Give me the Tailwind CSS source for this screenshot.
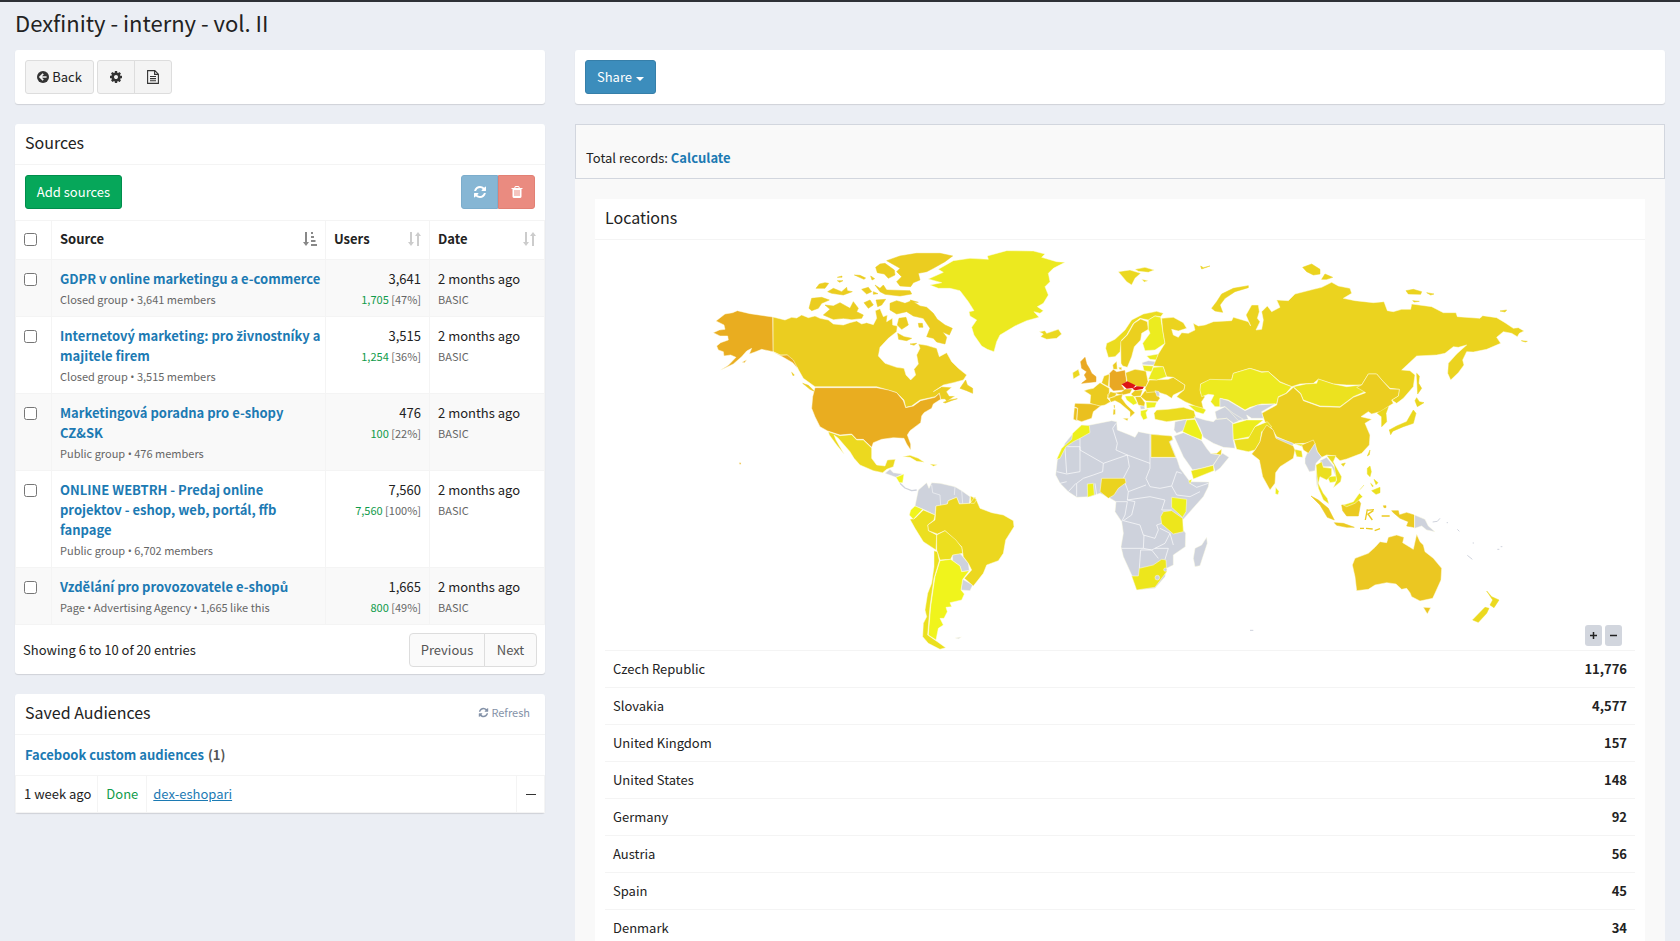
<!DOCTYPE html>
<html lang="en">
<head>
    <meta charset="UTF-8">
    <meta name="viewport" content="width=device-width, initial-scale=1.0">
    <title>Dexfinity - interny - vol. II</title>
    <script src="https://cdn.jsdelivr.net/npm/@tailwindcss/browser@4"></script>
    <style>
        body { font-family: 'Noto Sans CJK SC', 'Noto Sans', sans-serif; }
        #map path { stroke-linejoin: round; }
    </style>
</head>
<body class="bg-[#ebeef4] min-h-screen text-[13px] leading-5 text-[#222] border-t-2 border-[#2e3036]">
    <!-- Shared icons -->
    <svg class="hidden">
        <symbol id="i-refresh" viewBox="0 0 1792 1792"><path d="M1639 1056q0 5-1 7-64 268-268 434.5t-478 166.5q-146 0-282.5-55t-243.5-157l-129 129q-19 19-45 19t-45-19-19-45v-448q0-26 19-45t45-19h448q26 0 45 19t19 45-19 45l-137 137q71 66 161 102t187 36q134 0 250-65t186-179q11-17 53-117 8-23 30-23h192q13 0 22.5 9.5t9.5 22.5zm25-800v448q0 26-19 45t-45 19h-448q-26 0-45-19t-19-45 19-45l138-138q-148-137-349-137-134 0-250 65t-186 179q-11 17-53 117-8 23-30 23h-199q-13 0-22.5-9.5t-9.5-22.5v-7q65-268 270-434.5t480-166.5q146 0 284 55.5t245 156.5l130-129q19-19 45-19t45 19 19 45z"/></symbol>
        <symbol id="i-sort" viewBox="0 0 14 14"><path d="M3 0h2v10h2l-3 4-3-4h2zM10 14V4H8l3-4 3 4h-2v10z"/></symbol>
    </svg>

    <h1 class="px-[15px] pt-1 h-12 text-[22px] leading-8">Dexfinity - interny - vol. II</h1>

    <div class="grid grid-cols-3">
        <!-- Left column -->
        <div class="px-[15px]">
            <div class="bg-white rounded-[3px] shadow-[0_1px_1px_rgba(0,0,0,0.12)] p-[10px] flex gap-[3px] mb-5">
                <button class="h-[34px] w-[69px] flex items-center justify-center gap-[3px] bg-[#f4f4f4] border border-[#ddd] rounded-[3px]">
                    <svg class="w-3 h-3" viewBox="0 0 12 12"><circle cx="6" cy="6" r="6" fill="#333"/><path d="M9.6 6H3.4M6.2 2.8 3 6l3.2 3.2" fill="none" stroke="#f4f4f4" stroke-width="1.7"/></svg>
                    Back
                </button>
                <div class="flex">
                    <button aria-label="Settings" class="h-[34px] w-[38px] flex items-center justify-center bg-[#f4f4f4] border border-[#ddd] rounded-l-[3px]">
                        <svg class="w-[14px] h-[14px]" viewBox="0 0 1792 1792" fill="#333"><path d="M1152 896q0-106-75-181t-181-75-181 75-75 181 75 181 181 75 181-75 75-181zm512-109v222q0 12-8 23t-20 13l-185 28q-19 54-39 91 35 50 107 138 10 12 10 25t-9 23q-27 37-99 108t-94 71q-12 0-26-9l-138-108q-44 23-91 38-16 136-29 186-7 28-36 28h-222q-14 0-24.5-8.5t-11.5-21.5l-28-184q-49-16-90-37l-141 107q-10 9-25 9-14 0-25-11-126-114-165-168-7-10-7-23 0-12 8-23 15-21 51-66.5t54-70.5q-27-50-41-99l-183-27q-13-2-21-12.5t-8-23.5v-222q0-12 8-23t19-13l186-28q14-46 39-92-40-57-107-138-10-12-10-24 0-10 9-23 26-36 98.5-107.5t94.5-71.5q13 0 26 10l138 107q44-23 91-38 16-136 29-186 7-28 36-28h222q14 0 24.5 8.5t11.5 21.5l28 184q49 16 90 37l142-107q9-9 24-9 13 0 25 10 129 119 165 170 7 8 7 22 0 12-8 23-15 21-51 66.5t-54 70.5q26 50 41 98l183 28q13 2 21 12.5t8 23.5z"/></svg>
                    </button>
                    <button aria-label="Report" class="h-[34px] w-[38px] -ml-px flex items-center justify-center bg-[#f4f4f4] border border-[#ddd] rounded-r-[3px]">
                        <svg class="w-3 h-[14px]" viewBox="0 0 12 14" fill="none" stroke="#333" stroke-width="1.1"><path d="M.6.6h7.2l3.6 3.6v9.2H.6zM7.6.6v3.8h3.8M3 6.5h6M3 8.6h6M3 10.7h6"/></svg>
                    </button>
                </div>
            </div>

            <!-- Sources -->
            <div class="bg-white rounded-[3px] shadow-[0_1px_1px_rgba(0,0,0,0.12)] mb-5">
                <h2 class="px-[10px] pb-1 h-[41px] flex items-center text-[16px] border-b border-[#f4f4f4]">Sources</h2>
                <div class="p-[10px] pb-[11px] flex justify-between">
                    <button class="h-[34px] w-[97px] bg-[#06a75a] border border-[#008d4c] rounded-[3px] text-white">Add sources</button>
                    <div class="flex">
                        <button aria-label="Refresh sources" class="h-[34px] w-[37px] flex items-center justify-center bg-[#86b6d4] border border-[#7cadcc] rounded-l-[3px] text-white"><svg class="w-[14px] h-[14px]" fill="currentColor"><use href="#i-refresh"/></svg></button>
                        <button aria-label="Delete sources" class="h-[34px] w-[37px] flex items-center justify-center bg-[#ea8b80] border border-[#e28074] rounded-r-[3px] text-white"><svg class="w-[14px] h-[14px]" viewBox="0 0 1792 1792" fill="currentColor"><path d="M704 1376v-704q0-14-9-23t-23-9h-64q-14 0-23 9t-9 23v704q0 14 9 23t23 9h64q14 0 23-9t9-23zm256 0v-704q0-14-9-23t-23-9h-64q-14 0-23 9t-9 23v704q0 14 9 23t23 9h64q14 0 23-9t9-23zm256 0v-704q0-14-9-23t-23-9h-64q-14 0-23 9t-9 23v704q0 14 9 23t23 9h64q14 0 23-9t9-23zm-544-992h448l-48-117q-7-9-17-11h-317q-10 2-17 11zm928 32v64q0 14-9 23t-23 9h-96v948q0 83-47 143.5t-113 60.5h-832q-66 0-113-58.5t-47-141.5v-952h-96q-14 0-23-9t-9-23v-64q0-14 9-23t23-9h309l70-167q15-37 54-63t79-26h320q40 0 79 26t54 63l70 167h309q14 0 23 9t9 23z"/></svg></button>
                    </div>
                </div>
                <table class="w-full table-fixed border-collapse">
                    <colgroup><col class="w-9"><col><col class="w-[104px]"><col class="w-[115px]"></colgroup>
                    <thead>
                        <tr class="h-[39px] border border-[#f4f4f4] text-left">
                            <th class="pl-2 pb-[2px]"><input type="checkbox" aria-label="Select all" class="block w-[13px] h-[13px]"></th>
                            <th class="px-2 pb-[2px] border-l border-[#f4f4f4]"><div class="flex items-center justify-between">Source <svg class="w-[14px] h-[14px] text-[#888]" viewBox="0 0 14 14" fill="currentColor"><path d="M2 0h2v10h2l-3 4-3-4h2zM8 0h2v2H8zM8 4h3v2H8zM8 8h4.500v2H8zM8 12h6v2H8z"/></svg></div></th>
                            <th class="px-2 pb-[2px] border-l border-[#f4f4f4]"><div class="flex items-center justify-between">Users <svg class="w-[14px] h-[14px] text-[#ccc]" fill="currentColor"><use href="#i-sort"/></svg></div></th>
                            <th class="px-2 pb-[2px] border-l border-[#f4f4f4]"><div class="flex items-center justify-between">Date <svg class="w-[14px] h-[14px] text-[#ccc]" fill="currentColor"><use href="#i-sort"/></svg></div></th>
                        </tr>
                    </thead>
                    <tbody id="sources"></tbody>
                </table>
                <div class="h-[49px] px-2 flex items-center justify-between">
                    <span>Showing 6 to 10 of 20 entries</span>
                    <div class="flex text-[#555]">
                        <button class="h-[34px] w-[76px] bg-[#fafafa] border border-[#ddd] rounded-l-[4px]">Previous</button>
                        <button class="h-[34px] w-[53px] -ml-px bg-[#fafafa] border border-[#ddd] rounded-r-[4px]">Next</button>
                    </div>
                </div>
            </div>

            <!-- Saved audiences -->
            <div class="bg-white rounded-[3px] shadow-[0_1px_1px_rgba(0,0,0,0.12)]">
                <div class="pl-[10px] pr-[15px] pb-1 h-[41px] flex items-center justify-between border-b border-[#f4f4f4]">
                    <h2 class="text-[16px]">Saved Audiences</h2>
                    <button class="flex items-center gap-[2px] text-[11px] text-[#8492a8]"><svg class="w-[11px] h-[11px]" fill="currentColor"><use href="#i-refresh"/></svg>Refresh</button>
                </div>
                <p class="px-[10px] h-10 flex items-center gap-1 font-bold text-[#555]"><a href="#" class="text-[#1c7ab3]">Facebook custom audiences</a> (1)</p>
                <table class="w-full">
                    <tr class="h-[37px] border border-[#f4f4f4]">
                        <td class="w-[82px] pl-2 pr-[6px] whitespace-nowrap">1 week ago</td>
                        <td class="w-12 px-2 border-l border-[#f4f4f4] text-[#109b4b]">Done</td>
                        <td class="pl-[6px] border-l border-[#f4f4f4]"><a href="#" class="text-[#1c7ab3] underline">dex-eshopari</a></td>
                        <td class="w-7 border-l border-[#f4f4f4]"><div class="mx-auto w-[10px] h-px bg-[#333]"></div></td>
                    </tr>
                </table>
            </div>
        </div>

        <!-- Right column -->
        <div class="col-span-2 px-[15px]">
            <div class="bg-white rounded-[3px] shadow-[0_1px_1px_rgba(0,0,0,0.12)] p-[10px] mb-5">
                <button class="h-[34px] w-[71px] flex items-center justify-center gap-1 bg-[#3c8dbc] border border-[#367fa9] rounded-[3px] text-white">Share <span class="mt-[3px] border-x-4 border-t-4 border-x-transparent border-t-white"></span></button>
            </div>
            <div class="bg-[#f9f9f9]">
                <p class="h-[55px] px-[10px] pt-[23px] border border-[#d2d6de]">Total records: <a href="#" class="font-bold text-[#1c7ab3]">Calculate</a></p>
                <div class="px-5 pt-5">
                    <div class="bg-white">
                        <h2 class="px-[10px] pb-1 h-[41px] flex items-center text-[16px] border-b border-[#f4f4f4]">Locations</h2>
                        <div class="px-[10px]">
                            <div class="relative">
                                <svg id="map" class="block w-full" viewBox="605 240 1030 410" stroke="#fffce4" stroke-width="1.5">
                                    <!-- North America -->
                                    <g transform="translate(700 240) scale(.33333)">
                                        <g fill="#ebcd20">
                                            <path d="M219 231L255 240 275 232 290 234 305 225 325 233 345 228 360 235 385 240 400 252 430 255 450 248 470 243 485 252 500 248 520 254 530 235 526 212 540 206 550 230 562 225 560 245 577 235 578 255 592 258 590 275 565 295 540 322 535 348 555 370 590 382 612 385 618 405 632 420 647 405 642 388 655 372 650 345 660 325 655 312 680 316 710 325 718 350 740 338 755 365 775 385 800 405 790 420 760 428 730 435 700 455 725 440 755 442 740 455 748 468 765 468 740 485 735 478 722 478 718 460 705 470 660 480 635 498 617 502 612 480 590 458 530 440 345 440 310 415 293 385 262 345 240 345 219 335Z"/>
                                            <g stroke="#ebcd20">
                                                <path d="M308 430L325 436 345 455 330 448ZM780 445L797 420 802 435 818 445 818 460 800 452ZM275 397l8 8-4 2zM730 487l22-8 20-3-18 6-18 7z"/>
                                                <path d="M560 62L600 48 650 40 720 40 758 48 735 65 700 85 680 95 655 100 660 120 640 128 632 140 600 138 590 125 605 110 590 95 600 85 588 78ZM527 82L540 72 555 70 583 90 585 105 565 115 553 102 532 98ZM525 135L540 145 550 135 560 150 630 152 635 162 600 168 555 163 540 155Z"/>
                                                <path d="M570 190L590 182 615 190 635 182 660 198 680 202 700 220 712 238 735 255 757 265 748 285 728 276 740 292 735 312 710 306 700 295 680 290 690 265 670 235 640 228 620 215 590 222 570 210Z"/>
                                                <path d="M370 225L390 208 375 195 400 198 420 188 450 205 460 185 475 205 470 215 490 225 485 235 455 238 430 235 400 238ZM327 205L335 175 365 172 388 180 365 190 355 205 335 212ZM348 145L358 132 375 128 386 130 375 145ZM383 155L400 145 425 155 440 142 442 152 457 155 430 165 395 160ZM485 148L505 142 515 155 500 162ZM463 105L480 106 497 114 492 118ZM412 122h17l-10 5zM492 188L510 180 520 195 505 205ZM528 180L557 178 545 195 533 200ZM597 235L618 232 625 255 605 268 592 255ZM593 280L612 290 635 295 620 302 596 298ZM655 250h12l2 12h-12zM630 180l25 7h-20zM512 108l12 8-8 4zM412 112l14-4v4zM520 155l14 6-14 2zM630 312l20-2-8 6z"/>
                                            </g>
                                        </g>
                                        <g fill="#e9ad20">
                                            <path d="M48 243L75 222 98 218 112 212 150 221 218 231 219 335 205 332 185 328 165 336 148 342 155 325 140 333 125 350 100 372 62 390 85 376 108 352 92 345 72 348 70 335 55 330 50 318 62 308 85 300 83 288 60 288 40 278 58 270 75 268 72 255ZM219 335L243 346 262 345 280 360 293 385 278 368 250 352ZM126 367l14-8-6 9z"/>
                                            <path d="M345 443H530L565 450 590 458 610 482 617 503 640 498 662 482 705 472 718 460 722 478 700 492 695 505 672 518 665 528 662 548 630 572 622 585 632 612 632 630 620 612 612 595 580 593 545 598 520 608 515 622 490 598 470 598 455 582 420 585 383 573 360 560 345 530 335 505 338 470ZM117 668h6v5h-4z"/>
                                        </g>
                                        <path fill="#ecd91f" d="M385 575L420 587 455 584 470 600 490 600 515 624 515 655 530 675 555 678 562 660 586 658 580 680 560 688 548 698 520 692 480 675 462 655 450 635 415 595 402 585 408 600 432 642 410 615 388 585ZM608 650L630 646 655 655 673 667 650 664 630 652ZM690 672L712 674 700 679Z"/>
                                    </g>
                                    <!-- South and Central America -->
                                    <g transform="translate(860 460) scale(.33333)">
                                        <path fill="#ced2dc" d="M165 138L175 90 200 68 207 85 215 68 240 70 285 80 305 92 330 110 328 130 298 132 290 112 265 122 262 132 242 138 228 138 225 165 190 148ZM277 285L300 280 325 310 328 332 305 335 300 318 278 302ZM308 358L338 375 330 392 303 390ZM75 40L90 28 100 38 128 42 108 52ZM286 534l18-3-8 5z"/>
                                        <path fill="none" stroke="#ced2dc" stroke-width="4" d="M120 70L135 84 155 92 170 90"/>
                                        <path fill="none" stroke="#fff" d="M215 75L218 98 240 105 242 138M285 80L283 105M305 92L308 130"/>
                                        <path fill="#ecd71f" d="M203 195L225 180 228 138 262 132 265 122 290 112 298 132 330 130 345 110 360 145 395 158 430 165 460 182 462 200 437 240 430 280 415 302 380 315 370 340 340 378 313 355 335 330 325 310 310 290 305 260 285 240 255 212 232 222 205 212ZM332 108L350 118 343 130H332Z"/>
                                        <path fill="#ecdf1f" d="M150 178L165 175 190 150 225 165 222 180 203 195 205 212 230 225 228 270 190 245 165 205ZM230 225L255 212 288 240 305 262 308 280 278 285 272 298 240 300 230 270Z"/>
                                        <path fill="#f0f41c" d="M152 150L165 138 188 148 160 178 148 165ZM108 52L132 42 128 68 118 68ZM240 302L272 298 300 318 305 335 328 332 308 358 303 390 313 402 305 420 270 428 275 440 258 442 262 455 252 475 240 475 250 495 235 505 228 540 205 525 212 440 225 350Z"/>
                                        <path fill="#ebe01e" d="M222 272L232 275 238 302 222 355 210 440 203 525 232 545 257 563 240 568 205 550 188 530 190 490 200 470 195 450 203 400 215 370 222 320Z"/>
                                    </g>
                                    <!-- Greenland, Iceland, western and central Europe -->
                                    <g transform="translate(900 240) scale(.33333)">
                                        <path fill="#ece91f" d="M85 117L130 97 115 88 160 62 210 55 265 58 262 48 320 32 400 33 435 42 425 52 470 65 495 67 460 85 445 100 450 125 435 140 445 165 430 190 412 200 430 212 420 220 402 215 417 232 380 242 345 258 300 285 290 305 282 335 262 328 245 318 222 285 215 262 230 240 210 228 207 215 222 212 205 185 180 152 150 145 115 145 90 135 125 128Z"/>
                                        <path fill="#ebd81f" d="M418 275L435 272 440 280 475 268 485 282 470 295 440 298 422 290 430 282ZM655 95L690 90 722 100 705 115 695 135 680 125ZM705 88L735 82 763 90 745 97 715 94ZM725 118L745 122 733 126ZM518 398L535 388 540 405 520 417Z"/>
                                        <path fill="#e9a823" stroke="#e9a823" d="M542 365L555 352 560 372 568 385 575 400 588 410 588 425 545 430 560 418 553 405 560 395 545 385Z"/>
                                        <path fill="#e9a823" d="M628 400L640 388 650 395 675 390 680 425 665 435 675 450 640 453 628 440Z"/>
                                        <path fill="#eac01f" d="M525 490L585 492 602 498 580 515 575 535 545 545 530 540 533 505 523 500ZM523 503L533 505 530 542 520 538ZM640 458L665 455 675 447 697 447 690 460 665 466Z"/>
                                        <path fill="#ebcb20" d="M565 448L580 445 600 428 628 445 628 460 622 475 632 485 615 495 600 498 570 490 572 465 552 452ZM605 428L612 408 628 402 625 440 610 432ZM638 375L650 364 652 388 640 388ZM656 382h9v8l-7-2zM677 398L705 388 738 393 744 425 738 440 715 440 682 428ZM622 465L632 455 650 460 645 470 625 475ZM628 475L645 468 668 462 665 475 680 495 705 518 690 532 690 515 660 490 645 482 632 487ZM668 535H685L682 542ZM640 508h6v15l-7 2zM641 495h4v10h-3zM693 462L705 451 728 450 722 468 700 470ZM722 470L735 452 762 450 780 475 772 485 738 483ZM705 470L722 470 735 488 733 500 715 495Z"/>
                                        <path fill="#edf01f" d="M738 486L770 487 765 502 740 505ZM675 468L700 468 712 490 700 495 680 480ZM722 512L745 508 738 518 742 535 730 540 722 525Z"/>
                                        <path fill="#ced2dc" d="M720 498L733 498 735 507 722 508Z"/>
                                        <path fill="#dd1414" stroke="none" d="M665 433L682 424 707 436 700 444 680 446ZM697 446L710 439 732 440 728 447 705 451Z"/>
                                    </g>
                                    <!-- Northern and eastern Europe, Turkey -->
                                    <g transform="translate(1040 280) scale(.33333)">
                                        <path fill="#ebdb1f" d="M197 205L200 190 225 178 255 150 275 120 310 102 350 94 370 100 362 110 345 108 325 120 300 115 280 130 260 165 245 180 240 215 225 230 205 232ZM342 400L350 390 385 388 430 382 462 392 468 415 420 420 380 425 345 418Z"/>
                                        <path fill="#ebd01f" d="M243 250L242 185 262 165 282 130 302 117 322 125 325 148 305 160 302 180 283 200 275 230 262 262 248 258ZM322 312L328 300 385 298 400 292 435 315 432 330 400 345 395 355 380 345 350 335 320 338 315 325Z"/>
                                        <path fill="#ecec1f" d="M325 120L345 108 362 112 368 150 375 190 345 210 315 212 308 190 330 160 325 148ZM320 228L355 222 350 240 330 238ZM308 256L340 258 335 275 312 272ZM325 298L340 262 370 260 380 290 350 300ZM445 375L480 378 498 390 490 402 468 395Z"/>
                                        <path fill="#ced2dc" d="M306 248L325 242 350 245 350 256 308 254ZM345 332l12 3 2 12-8 2z"/>
                                    </g>
                                    <!-- Africa and the Middle East -->
                                    <g transform="translate(1040 400) scale(.33333)">
                                        <path fill="#ced2dc" d="M95 105L125 75 150 75 215 62 230 65 232 90 270 105 285 112 295 95 330 102 395 108 400 120 390 125 412 180 420 205 450 245 507 246 505 260 490 290 450 335 428 360 430 390 437 400 436 440 400 465 400 495 380 505 375 530 345 565 290 570 275 525 250 470 243 440 250 400 245 365 225 335 228 305 205 292 180 280 150 290 110 292 85 275 60 250 47 225 52 180 75 130ZM460 475L465 445 485 435 500 412 502 430 480 497 465 500ZM405 65L440 58 435 90 410 100 402 90ZM402 108L430 98 460 110 485 122 500 145 512 160 540 165 520 195 485 205 458 210 430 170ZM540 165L548 160 567 172 540 205 525 215 520 195Z"/>
                                        <path fill="none" stroke="#fff" stroke-width="2" d="M120 115V150L190 190 262 165 330 190M82 140H120V215L80 222 50 215M228 70L218 85 232 130 228 150 262 165 268 200 250 235M330 103V205L318 235 330 260 360 265 395 258M190 190L188 215 160 225 130 235 110 250M75 145L80 220M333 172H410M395 258L410 215 425 220M395 258L410 285 450 290 480 275M450 250L470 262 505 250M250 235L265 275 318 255M265 275L262 300 330 290 375 300 365 330 395 330M228 305H262L255 345 245 365M262 300L285 305 275 345 250 362 300 375 310 405 345 415 355 390 350 375 365 370M245 445H310L312 405M310 445L335 450 375 430 390 400 360 385M298 505L302 450 335 450 355 475M345 445L385 445 375 478M390 400L400 435M110 250V290M85 275L108 250M60 250L80 245M165 250L170 285"/>
                                        <path fill="#edf01c" d="M50 178L65 145 95 118 98 100 125 75 148 77 150 98 120 115 100 125 78 140 60 175ZM440 60L465 58 487 105 485 120 455 108 428 95ZM142 252L160 250 163 285 143 292ZM395 292L440 298 438 335 428 352 395 322ZM446 242l10-4-6 14z"/>
                                        <path fill="#ede61c" d="M370 335L395 332 428 355 430 395 400 402 365 372 362 350ZM275 528L295 528 298 505 340 495 365 478 378 480 380 515 345 562 290 570ZM453 212L485 205 520 196 522 212 460 237Z"/>
                                        <path fill="#ebd31f" d="M333 103L395 108 398 118 388 125 407 172H333ZM185 235L255 235 258 248 235 265 222 285 205 295 180 275ZM512 160L530 160 545 147 543 165Z"/>
                                        <circle cx="352" cy="533" r="7" fill="#ced2dc"/>
                                        <circle cx="376" cy="509" r="5" fill="#ced2dc"/>
                                    </g>
                                    <!-- Asia -->
                                    <g transform="translate(1180 250) scale(.33333)">
                                        <path fill="#ebd31f" d="M-55 205L-20 202 10 218 20 235-5 243-25 238-20 255-5 262 5 248 25 250 45 240 40 220 55 228 75 225 100 215 155 212 160 202 205 215 212 228 198 195 215 165 235 165 238 185 232 205 240 215 228 240 245 238 250 210 245 185 262 168 275 185 300 172 290 150 325 152 345 132 400 118 425 112 455 97 475 108 510 115 515 130 490 145 525 152 580 158 612 155 622 182 640 185 665 178 692 178 695 162 755 170 790 188 828 188 832 200 900 205 908 197 950 203 975 218 1000 235 1015 233 1032 243 1018 250 1012 260 995 250 970 245 950 262 962 280 920 298 880 306 860 305 848 330 852 345 835 368 812 390 803 370 805 340 830 312 860 285 835 292 820 290 795 310 770 315 710 318 665 360 690 362 705 375 700 410 670 445 650 460 635 450 655 438 658 418 630 415 610 395 590 372 565 372 545 405 500 405 460 402 415 388 400 400 360 402 335 410 300 395 265 365 245 365 210 355 160 370 155 390 90 390 62 402 62 430 75 440 65 455 70 475 45 468 15 455-10 440 0 430 12 420 15 405-20 382-40 380-50 350-80 348-65 312-45 280-52 240Z"/>
                                        <path fill="#ebd31f" stroke="#ebd31f" d="M95 175L110 155 125 132 160 115 205 107 205 113 165 125 135 145 120 165 128 187 105 183ZM368 52L395 42 420 58 420 72 400 75 380 65ZM425 88L435 72 458 82 440 88ZM678 122L700 118 725 125 722 133 685 132ZM740 128l22 4-10 3zM698 152l20 2-15 2zM960 183L980 180 975 186ZM62 48L70 53 90 48 65 57ZM710 370L718 378 716 400 725 415 713 432ZM1024 272l18 2-6 2z"/>
                                        <path fill="#edea1f" d="M62 402L90 388 155 390 160 370 210 355 245 367 265 365 300 397 335 410 318 430 295 440 290 462 245 462 210 472 195 480 170 465 145 450 120 445 120 470 105 470 92 455 102 435 85 433 65 440 60 420Z"/>
                                        <path fill="#ece21f" d="M340 410L378 402 410 400 415 387 460 402 500 410 545 405 555 425 520 440 480 470 420 468 370 450 362 430Z"/>
                                        <path fill="#ebce20" d="M340 412L362 432 370 452 420 470 480 472 520 442 557 428 530 412 545 405 565 372 590 372 610 395 630 417 658 418 655 438 635 450 640 460 600 485 575 492 565 485 543 500 575 508 555 520 570 555 568 585 545 610 500 627 480 632 465 618 440 615 425 622 412 605 400 575 375 580 340 582 290 560 275 535 255 515 245 490 290 465 295 442 320 430Z"/>
                                        <path fill="#ced2dc" d="M120 445L145 452 170 467 195 482 232 465 285 462 245 485 250 505 215 505 200 495 205 508 175 512 150 485 135 470 120 472ZM105 485L135 470 160 490 190 508 160 520 140 505 110 508ZM42 500L75 510 100 515 108 508 140 505 158 520 160 570 165 595 130 592 100 580 70 562 60 535ZM285 560L340 580 338 590 290 572ZM375 625L385 600 405 580 412 605 425 622 408 640 405 662 388 665 375 640ZM408 660L415 700 411 712 408 680ZM420 632L440 622 470 660 468 680 455 650 428 650Z"/>
                                        <path fill="#ecec1c" d="M158 522L200 510 250 510 225 530 210 560 160 570ZM287 712l10 12-3 10-8-3zM442 680L470 678 468 695 450 698ZM345 582L370 582 368 590Z"/>
                                        <path fill="#ebdf1f" d="M162 570L205 565 225 530 262 515 275 530 245 545 240 575 225 600 205 605 170 598ZM343 598L365 602 368 622 350 620ZM440 617L468 617 460 635 485 680 482 695 460 713 470 690 462 645ZM408 645L425 635 430 652 455 655 455 675 440 690 420 680 415 700 430 730 442 745 447 762 430 750 415 715 410 670Z"/>
                                        <path fill="#ebdf1f" stroke="#ebdf1f" d="M562 655L570 648 574 665 570 680 562 672ZM582 688l12 10-6 6zM575 722L600 712 600 728 588 733ZM572 700l8 8-3 2zM552 705l-12 14"/>
                                        <path fill="#ebc821" d="M247 545L260 525 280 540 288 565 340 588 345 600 340 625 300 650 287 668 285 700 270 720 248 680 238 630 215 612 225 600 240 575ZM365 585L400 570 405 580 385 610 370 600Z"/>
                                        <path fill="#ead71f" stroke="#ead71f" d="M484 642l12-3-6 10zM562 618L570 600 568 614ZM592 490L625 470 618 490 620 515 605 530 605 500ZM705 452L710 443 718 455 732 458 712 470ZM700 480L708 490 700 520 670 530 635 545 628 540 650 528 680 515ZM628 540l10 4-6 10z"/>
                                    </g>
                                    <!-- South-east Asia and Oceania -->
                                    <g transform="translate(1240 440) scale(.33333)">
                                        <path fill="#ebca21" stroke="#ebca21" d="M213 168L235 180 265 205 283 240 262 232 240 195ZM283 248L310 250 343 262 320 262 290 256ZM305 195L330 195 355 180 362 190 355 228 320 228 308 212ZM455 212L475 212 478 225 500 218 522 225 522 262 500 258 505 245 480 235 460 218ZM430 197h8v6h-6z"/>
                                        <path fill="none" stroke="#ebca21" stroke-width="4" d="M360 265h12M378 265l20 2M404 272l16-6M380 211l22-2M382 208L376 240M382 224L400 212M384 222L397 240M425 228h24"/>
                                        <path fill="#ece41f" d="M310 195L340 185 358 160 368 170 345 190 320 200Z"/>
                                        <path fill="#ebc722" d="M337 375L345 355 385 340 405 322 420 305 440 308 445 292 470 285 492 292 488 308 520 328 530 283 540 305 550 315 555 335 580 355 605 385 603 420 585 460 578 475 540 483 515 470 510 458 500 445 485 448 468 432 440 428 405 435 385 448 350 452 345 410ZM550 502L572 503 562 522Z"/>
                                        <path fill="#ebd91f" stroke="#ebd91f" d="M740 453L755 470 777 480 762 503 750 495 758 480ZM698 540L735 502 747 505 740 520 715 547Z"/>
                                        <path fill="#ced2dc" d="M524 225L555 238 565 258 585 275 560 270 545 258 524 265Z"/>
                                        <path fill="none" stroke="#ced2dc" stroke-width="3" d="M578 246L592 244 600 235M682 346L697 358M772 328h6M782 320h5M698 309h4M620 248h4M652 268l6 6M30 571h10"/>
                                    </g>
                                </svg>
                                <div class="absolute right-[13px] bottom-1 flex gap-[3px]">
                                    <button aria-label="Zoom in" class="w-[17px] h-[21px] rounded-[3px] bg-[#d2d6de] flex items-center justify-center"><svg class="w-[7px] h-[7px]" viewBox="0 0 7 7" stroke="#222" stroke-width="1.5"><path d="M0 3.500h7M3.500 0v7"/></svg></button>
                                    <button aria-label="Zoom out" class="w-[17px] h-[21px] rounded-[3px] bg-[#d2d6de] flex items-center justify-center"><svg class="w-[7px] h-[7px]" viewBox="0 0 7 7" stroke="#222" stroke-width="1.5"><path d="M0 3.500h7"/></svg></button>
                                </div>
                            </div>
                            <table class="w-full"><tbody id="countries"></tbody></table>
                        </div>
                    </div>
                </div>
            </div>
        </div>
    </div>

    <script>
        const sources = [
            ['GDPR v online marketingu a e-commerce', 'Closed group • 3,641 members', '3,641', '1,705', '47%'],
            ['Internetový marketing: pro živnostníky a majitele firem', 'Closed group • 3,515 members', '3,515', '1,254', '36%'],
            ['Marketingová poradna pro e-shopy CZ&amp;SK', 'Public group • 476 members', '476', '100', '22%'],
            ['ONLINE WEBTRH - Predaj online projektov - eshop, web, portál, ffb fanpage', 'Public group • 6,702 members', '7,560', '7,560', '100%'],
            ['Vzdělání pro provozovatele e-shopů', 'Page • Advertising Agency • 1,665 like this', '1,665', '800', '49%']
        ];
        const countries = [
            ['Czech Republic', '11,776'], ['Slovakia', '4,577'], ['United Kingdom', '157'], ['United States', '148'],
            ['Germany', '92'], ['Austria', '56'], ['Spain', '45'], ['Denmark', '34']
        ];

        // The CJK face has a full-width bullet and no usable ž
        const latin = text => text.replace(/[•ž]/g, c => `<span class="font-['Open_Sans'] leading-none">${c}</span>`);

        document.getElementById('sources').innerHTML = sources.map(([name, info, users, found, share]) => `
            <tr class="border border-[#f4f4f4] odd:bg-[#f9f9f9] align-top">
                <td class="pl-2 pt-[13px]"><input type="checkbox" aria-label="${name}" class="block w-[13px] h-[13px]"></td>
                <td class="pl-2 pt-[9px] pb-[7px] border-l border-[#f4f4f4]">
                    <a href="#" class="font-bold text-[#1c7ab3] block">${latin(name)}</a>
                    <div class="text-[11px] text-[#666]">${latin(info)}</div>
                </td>
                <td class="px-2 pt-[9px] pb-[7px] border-l border-[#f4f4f4] text-right">
                    ${users}
                    <div class="text-[11px] text-[#666]"><span class="text-[#109b4b]">${found}</span> [${share}]</div>
                </td>
                <td class="px-2 pt-[9px] pb-[7px] border-l border-[#f4f4f4]">
                    2 months ago
                    <div class="text-[11px] text-[#666]">BASIC</div>
                </td>
            </tr>
        `).join('');

        document.getElementById('countries').innerHTML = countries.map(([name, count]) => `
            <tr class="h-[37px] border-t border-[#f4f4f4]">
                <td class="px-2">${name}</td>
                <td class="px-2 text-right font-bold">${count}</td>
            </tr>
        `).join('');
    </script>
</body>
</html>
